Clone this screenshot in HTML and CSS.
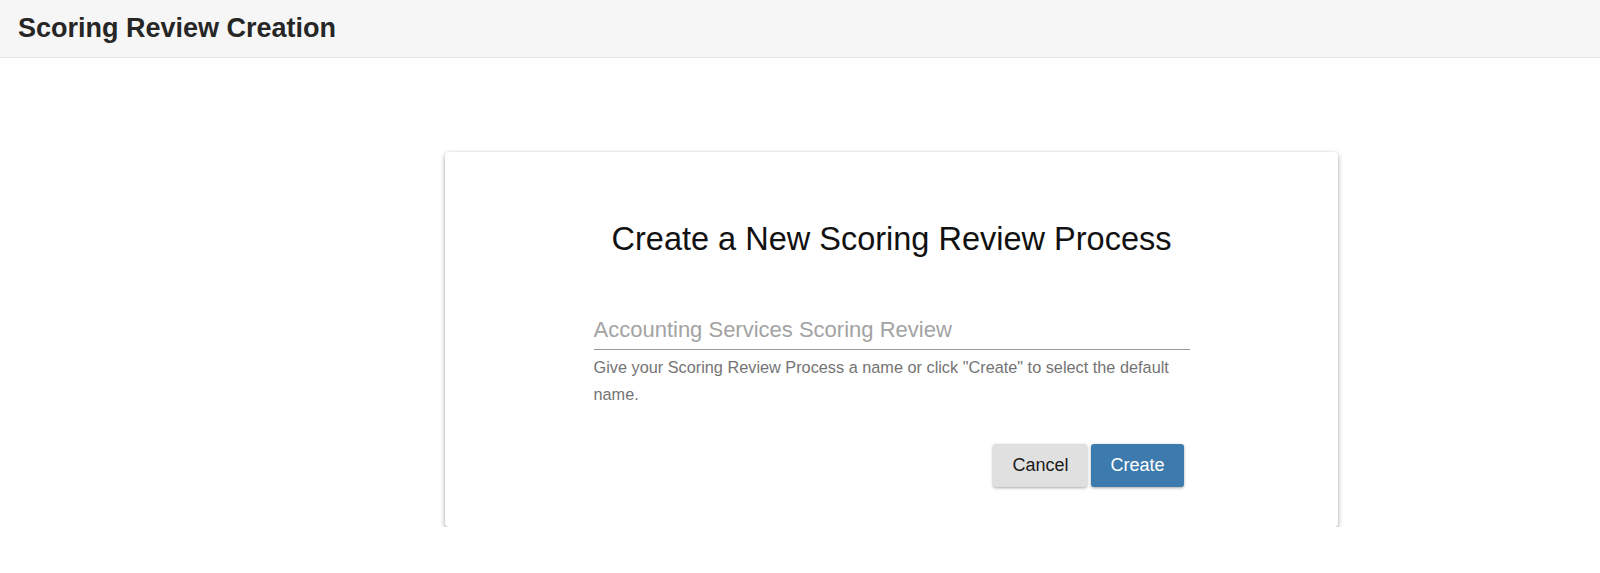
FILE: index.html
```html
<!DOCTYPE html>
<html>
<head>
    <title>Scoring Review Creation</title>
    <link rel="stylesheet" href="styles.css">
</head>
<body>
    <div class="top-bar">
        <h1 class="page-title">Scoring Review Creation</h1>
    </div>

    <div class="page-body">
        <div class="card">
            <h2 class="card-title">Create a New Scoring Review Process</h2>
            <div class="form">
                <input type="text" class="name-input" placeholder="Accounting Services Scoring Review">
                <p class="helper">Give your Scoring Review Process a name or click "Create" to select the default name.</p>
                <div class="actions">
                    <button class="btn btn-cancel">Cancel</button>
                    <button class="btn btn-create">Create</button>
                </div>
            </div>
        </div>
    </div>
</body>
</html>
```

FILE: styles.css
```css
body {
    margin: 0;
    font-family: "Liberation Sans", Arial, sans-serif;
    background: #fff;
    color: #222;
}
.top-bar {
    height: 57px;
    background: #f6f6f6;
    border-bottom: 1px solid #e6e6e6;
    display: flex;
    align-items: center;
    padding-left: 18px;
}
.page-title {
    margin: 0;
    font-size: 27px;
    font-weight: bold;
    color: #262626;
}
.page-body {
    padding: 94px 0 0 445px;
}
.card {
    width: 893px;
    box-sizing: border-box;
    background: #fff;
    border-radius: 4px;
    box-shadow: 0 2px 5px rgba(0, 0, 0, 0.35), 0 0 2px rgba(0, 0, 0, 0.08);
    padding: 69px 0 40px;
    display: flex;
    flex-direction: column;
    align-items: center;
}
.card-title {
    margin: 0;
    font-size: 32.5px;
    font-weight: normal;
    color: #111;
    line-height: 36px;
}
.form {
    width: 596px;
    margin-top: 54px;
}
.name-input {
    display: block;
    width: 100%;
    box-sizing: border-box;
    border: none;
    border-bottom: 1px solid #9a9a9a;
    padding: 6px 0 6px;
    font-family: inherit;
    font-size: 22px;
    outline: none;
    color: #222;
}
.name-input::placeholder {
    color: #a3a3a3;
}
.helper {
    margin: 4px 0 0;
    font-size: 16.3px;
    line-height: 27px;
    color: #747474;
}
.actions {
    display: flex;
    justify-content: flex-end;
    gap: 4px;
    margin-top: 36px;
    padding-right: 6px;
}
.btn {
    height: 43px;
    padding: 0 19px;
    border: none;
    border-radius: 3px;
    font-family: inherit;
    font-size: 18px;
    cursor: pointer;
    box-shadow: 0 1px 3px rgba(0, 0, 0, 0.35);
}
.btn-cancel {
    background: #e0e0e0;
    color: #1a1a1a;
}
.btn-create {
    background: #3d7aad;
    color: #fff;
}
```
